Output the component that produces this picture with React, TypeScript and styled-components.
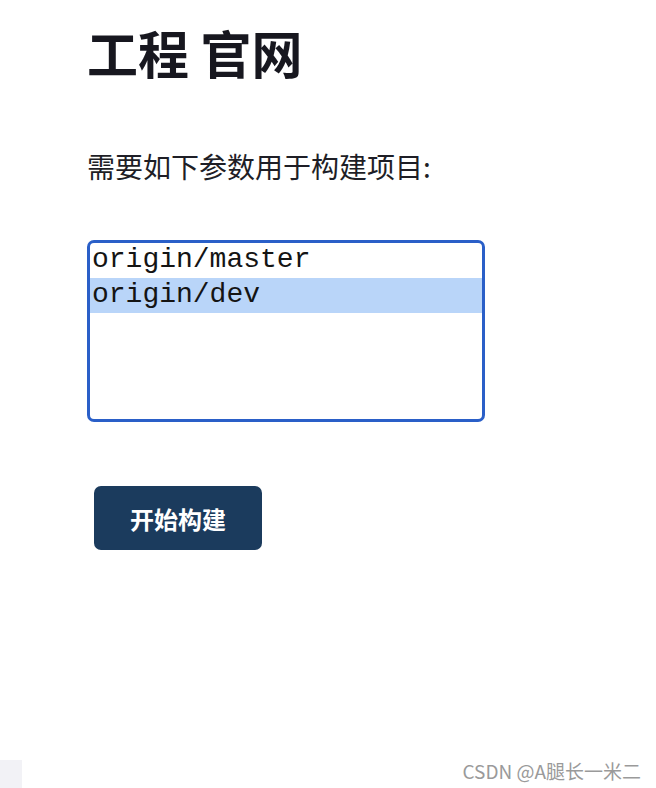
import { createGlobalStyle } from "styled-components";
import styled from "styled-components";
import { useState } from "react";

const GlobalStyle = createGlobalStyle`
  html, body {
    margin: 0;
    padding: 0;
    background: #ffffff;
  }
  body {
    font-family: "Noto Sans CJK SC", "Noto Sans", sans-serif;
    color: #1b1b22;
  }
`;

const branches = ["origin/master", "origin/dev"];

export default function App() {
  const [selected, setSelected] = useState<number>(1);

  return (
    <Page>
      <GlobalStyle />
      <Content>
        <Title>工程 官网</Title>
        <Subtitle>需要如下参数用于构建项目:</Subtitle>
        <ListBox>
          {branches.map((b, i) => (
            <Option
              key={b}
              $active={selected === i}
              onClick={() => setSelected(i)}
            >
              {b}
            </Option>
          ))}
        </ListBox>
        <BuildButton>开始构建</BuildButton>
      </Content>
      <Footer>
        <Corner />
        <Watermark>CSDN @A腿长一米二</Watermark>
      </Footer>
    </Page>
  );
}

const Page = styled.div`
  width: 656px;
  height: 788px;
  display: flex;
  flex-direction: column;
  justify-content: space-between;
  overflow: hidden;
`;

const Content = styled.div`
  padding: 17px 0 0 87px;
  display: flex;
  flex-direction: column;
  align-items: flex-start;
`;

const Title = styled.h1`
  margin: 0;
  font-size: 51px;
  line-height: 70px;
  font-weight: 700;
  color: #17171f;
`;

const Subtitle = styled.p`
  margin: 59px 0 0;
  font-size: 28px;
  line-height: 40px;
  font-weight: 400;
  color: #1e1e26;
`;

const ListBox = styled.div`
  margin-top: 54px;
  width: 392px;
  height: 176px;
  border: 3.5px solid #2a5fc8;
  border-radius: 7px;
  overflow: hidden;
`;

const Option = styled.div<{ $active?: boolean }>`
  height: 35px;
  line-height: 33px;
  padding-left: 2px;
  font-family: "Liberation Mono", "Courier New", monospace;
  font-size: 28px;
  color: #141414;
  background: ${(p) => (p.$active ? "#b9d5f9" : "transparent")};
  cursor: default;
`;

const BuildButton = styled.button`
  margin: 64px 0 0 7px;
  width: 168px;
  height: 64px;
  border: none;
  border-radius: 7px;
  background: #1b3b5d;
  color: #ffffff;
  font-family: "Noto Sans CJK SC", "Noto Sans", sans-serif;
  font-size: 24px;
  font-weight: 700;
  cursor: pointer;
`;

const Footer = styled.div`
  display: flex;
  justify-content: space-between;
  align-items: flex-end;
  padding-right: 15px;
`;

const Corner = styled.div`
  width: 22px;
  height: 28px;
  background: #f2f2f6;
`;

const Watermark = styled.span`
  font-family: "Noto Sans CJK SC", "Noto Sans", sans-serif;
  font-size: 19px;
  color: #9a9a9a;
  line-height: 24px;
  margin-bottom: 5px;
`;
